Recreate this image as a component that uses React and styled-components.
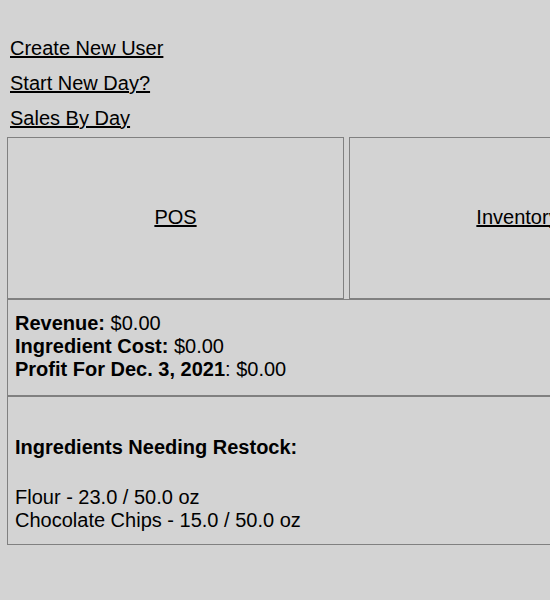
import styled, { createGlobalStyle } from "styled-components";

const GlobalStyle = createGlobalStyle`
    html, body {
        margin: 0;
        padding: 0;
        background: lightgray;
        overflow: hidden;
    }
    body {
        font-family: "Liberation Sans", Arial, sans-serif;
        font-size: 20px;
        color: black;
    }
`;

const Page = styled.div`
    padding-top: 37px;
    width: 700px;
`;

const NavLinks = styled.nav`
    display: flex;
    flex-direction: column;
    gap: 12px;
    padding-left: 10px;
    margin-bottom: 7px;
`;

const NavLink = styled.a`
    display: block;
    line-height: 23px;
    color: black;
    text-decoration: underline;
    align-self: flex-start;
    cursor: pointer;
`;

const CardRow = styled.div`
    display: flex;
    gap: 5px;
    margin-left: 7px;
`;

const Card = styled.div`
    box-sizing: border-box;
    width: 337px;
    height: 162px;
    border: 1px solid gray;
    display: flex;
    align-items: center;
    justify-content: center;
    padding-bottom: 2px;
`;

const CardLink = styled.a`
    color: black;
    text-decoration: underline;
    line-height: 23px;
    cursor: pointer;
`;

const Panel = styled.div`
    box-sizing: border-box;
    width: 679px;
    margin-left: 7px;
    border: 1px solid gray;
    padding: ${(p) => p.$pad};
    line-height: 23px;
`;

const Line = styled.div`
    line-height: 23px;
`;

const Heading = styled.div`
    font-weight: bold;
    line-height: 23px;
    margin-bottom: 27px;
`;

const summary = [
  { label: "Revenue:", value: " $0.00" },
  { label: "Ingredient Cost:", value: " $0.00" },
  { label: "Profit For Dec. 3, 2021", value: ": $0.00" },
];

const restock = [
  { name: "Flour", have: "23.0", want: "50.0" },
  { name: "Chocolate Chips", have: "15.0", want: "50.0" },
];

export default function App() {
  return (
    <>
      <GlobalStyle />
      <Page>
        <NavLinks>
          <NavLink>Create New User</NavLink>
          <NavLink>Start New Day?</NavLink>
          <NavLink>Sales By Day</NavLink>
        </NavLinks>
        <CardRow>
          <Card>
            <CardLink>POS</CardLink>
          </Card>
          <Card>
            <CardLink>Inventory</CardLink>
          </Card>
        </CardRow>
        <Panel $pad="12px 7px 14px">
          {summary.map((s) => (
            <Line key={s.label}>
              <b>{s.label}</b>
              {s.value}
            </Line>
          ))}
        </Panel>
        <Panel $pad="39px 7px 12px">
          <Heading>Ingredients Needing Restock:</Heading>
          {restock.map((r) => (
            <Line key={r.name}>
              {r.name} - {r.have} / {r.want} oz
            </Line>
          ))}
        </Panel>
      </Page>
    </>
  );
}
